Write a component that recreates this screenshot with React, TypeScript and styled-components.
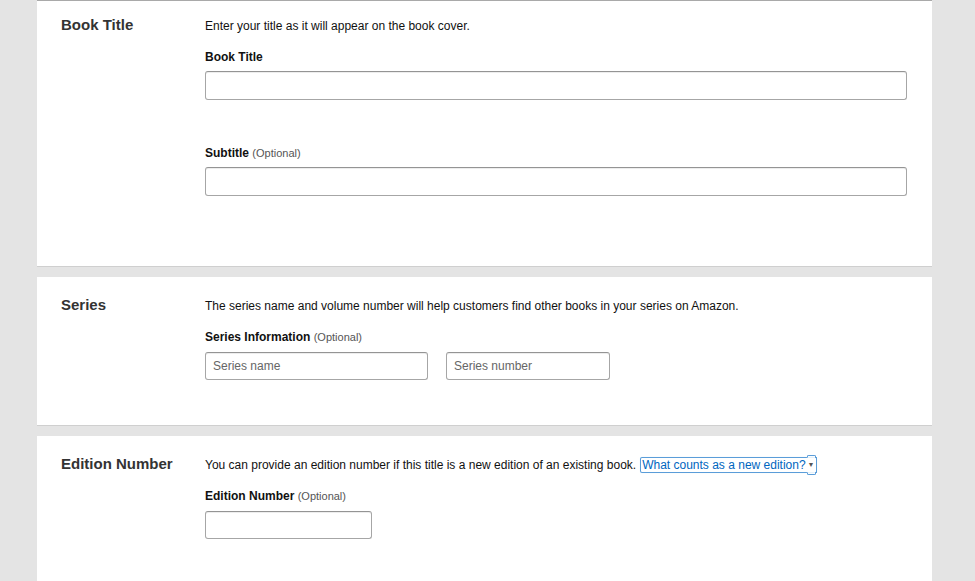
import React from 'react'
import styled, { createGlobalStyle } from 'styled-components'

const GlobalStyle = createGlobalStyle`
  html, body {
    margin: 0;
    background: #e4e4e4;
    font-family: "Liberation Sans", Arial, sans-serif;
  }
`

const Page = styled.div`
  display: flex;
  flex-direction: column;
  gap: 10px;
  padding: 0 43px 0 37px;
`

const Card = styled.section<{ $top: number; $bottom: number; $first?: boolean }>`
  display: flex;
  background: #fff;
  border-top: ${p => (p.$first ? '1px solid #a9a9a9' : 'none')};
  border-bottom: 1px solid #cfcfcf;
  padding: ${p => p.$top}px 25px ${p => p.$bottom}px 24px;
`

const SectionTitle = styled.h2`
  flex: 0 0 144px;
  margin: 0;
  font-size: 15px;
  line-height: 18px;
  font-weight: bold;
  color: #333;
`

const Body = styled.div`
  flex: 1;
  display: flex;
  flex-direction: column;
`

const Desc = styled.p`
  margin: 1px 0 13px;
  font-size: 12px;
  line-height: 18px;
  color: #111;
`

const Label = styled.div<{ $gapTop?: number; $gapBottom?: number }>`
  margin-top: ${p => p.$gapTop ?? 0}px;
  margin-bottom: ${p => p.$gapBottom ?? 6}px;
  font-size: 12px;
  line-height: 18px;
  font-weight: bold;
  color: #111;
`

const Optional = styled.span`
  font-weight: normal;
  font-size: 11px;
  color: #555;
`

const Row = styled.div`
  display: flex;
  gap: 18px;
`

const Input = styled.input<{ $w?: number; $h?: number }>`
  box-sizing: border-box;
  width: ${p => (p.$w ? `${p.$w}px` : '100%')};
  height: ${p => p.$h ?? 28}px;
  padding: 0 7px;
  border: 1px solid #a6a6a6;
  border-top-color: #949494;
  border-radius: 3px;
  box-shadow: 0 1px 0 rgba(255, 255, 255, 0.5), inset 0 1px 0 rgba(0, 0, 0, 0.07);
  font-family: "Liberation Sans", Arial, sans-serif;
  font-size: 12px;
  color: #111;
  outline: none;
  &::placeholder {
    color: #666;
  }
`

const HelpLink = styled.a`
  margin-left: 5px;
  padding: 0 1px;
  color: #0066c0;
  text-decoration: none;
  outline: 1px solid #5b9dd9;
  box-shadow: 0 0 2px #9ecaed;
  border-radius: 1px;
  cursor: pointer;
`

const Caret = styled.span`
  display: inline-block;
  margin-left: 2px;
  font-size: 7px;
  color: #555;
  vertical-align: 2px;
`

export default function App() {
  return (
    <>
      <GlobalStyle />
      <Page>
        <Card $first $top={15} $bottom={70}>
          <SectionTitle>Book Title</SectionTitle>
          <Body>
            <Desc>Enter your title as it will appear on the book cover.</Desc>
            <Label $gapBottom={5}>Book Title</Label>
            <Input $h={29} />
            <Label $gapTop={44} $gapBottom={5}>
              Subtitle <Optional>(Optional)</Optional>
            </Label>
            <Input $h={29} />
          </Body>
        </Card>

        <Card $top={19} $bottom={45}>
          <SectionTitle>Series</SectionTitle>
          <Body>
            <Desc>
              The series name and volume number will help customers find other books in your series on Amazon.
            </Desc>
            <Label>
              Series Information <Optional>(Optional)</Optional>
            </Label>
            <Row>
              <Input $w={223} placeholder="Series name" />
              <Input $w={164} placeholder="Series number" />
            </Row>
          </Body>
        </Card>

        <Card $top={19} $bottom={46}>
          <SectionTitle>Edition Number</SectionTitle>
          <Body>
            <Desc>
              You can provide an edition number if this title is a new edition of an existing book.
              <HelpLink>
                What counts as a new edition?<Caret>▼</Caret>
              </HelpLink>
            </Desc>
            <Label>
              Edition Number <Optional>(Optional)</Optional>
            </Label>
            <Input $w={167} />
          </Body>
        </Card>
      </Page>
    </>
  )
}
